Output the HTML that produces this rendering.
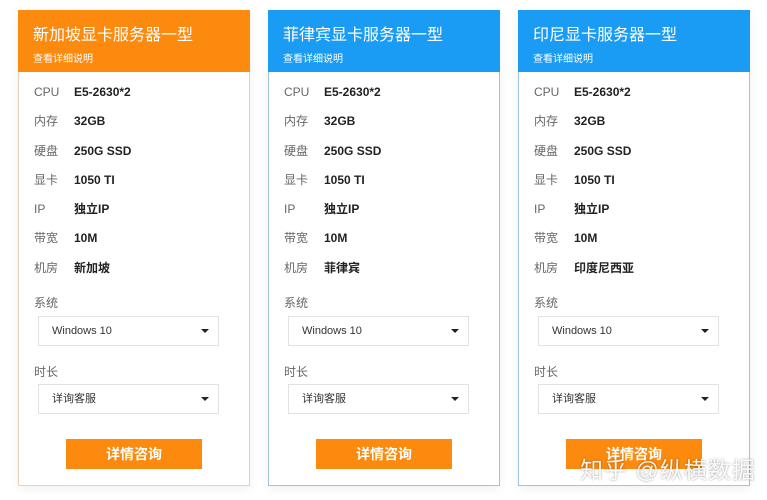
<!DOCTYPE html>
<html><head><meta charset="utf-8"><style>
*{margin:0;padding:0;box-sizing:border-box}
body{width:767px;height:500px;background:#fff;font-family:"Liberation Sans","Noto Sans CJK SC",sans-serif;position:relative;overflow:hidden}
.card{position:absolute;top:10px;width:232px;height:476px;border:1px solid #e6d3b8;background:#fff;box-shadow:0 3px 10px rgba(0,0,0,.06)}
.card.b{border-color:#9fc6d8}
.hd{height:62px;background:#fb8a0e;color:#fff;padding:15px 0 0 15px;margin:-1px -1px 0 -1px}
.b .hd{background:#1a9cf4}
.hd h2{font-size:16px;font-weight:normal;line-height:22px}
.hd p{font-size:10px;margin-top:6px;line-height:14px}
.row{position:absolute;left:15px;font-size:12px;color:#666;height:20px;line-height:20px;width:200px}
.row span{position:absolute;left:0;top:0}
.row b{position:absolute;left:40px;top:0;color:#222;white-space:nowrap}
.lab{position:absolute;left:15px;font-size:12px;color:#666}
.sel{position:absolute;left:19px;width:181px;height:30px;border:1px solid #e2e2e2;font-size:11px;color:#333;padding:0 0 0 13px;line-height:28px}
.sel:after{content:"";position:absolute;right:9px;top:12px;border:4px solid transparent;border-top:4px solid #222;border-bottom:0}
.btn{position:absolute;left:47px;top:428px;width:136px;height:30px;background:#fb8a0e;color:#fff;font-weight:bold;font-size:14px;text-align:center;line-height:30px}
.wm{position:absolute;left:580px;top:451px;font-size:23px;color:rgba(255,255,255,.92);text-shadow:0 0 2px rgba(0,0,0,.4);letter-spacing:1px}
</style></head><body>
<div class="card" style="left:18px">
<div class="hd"><h2>新加坡显卡服务器一型</h2><p>查看详细说明</p></div>
<div class="row" style="top:71px"><span>CPU</span><b>E5-2630*2</b></div>
<div class="row" style="top:100px"><span>内存</span><b>32GB</b></div>
<div class="row" style="top:130px"><span>硬盘</span><b>250G SSD</b></div>
<div class="row" style="top:159px"><span>显卡</span><b>1050 TI</b></div>
<div class="row" style="top:188px"><span>IP</span><b>独立IP</b></div>
<div class="row" style="top:217px"><span>带宽</span><b>10M</b></div>
<div class="row" style="top:247px"><span>机房</span><b>新加坡</b></div>
<div class="lab" style="top:283px">系统</div>
<div class="sel" style="top:305px">Windows 10</div>
<div class="lab" style="top:352px">时长</div>
<div class="sel" style="top:373px">详询客服</div>
<div class="btn">详情咨询</div>
</div>
<div class="card b" style="left:268px">
<div class="hd"><h2>菲律宾显卡服务器一型</h2><p>查看详细说明</p></div>
<div class="row" style="top:71px"><span>CPU</span><b>E5-2630*2</b></div>
<div class="row" style="top:100px"><span>内存</span><b>32GB</b></div>
<div class="row" style="top:130px"><span>硬盘</span><b>250G SSD</b></div>
<div class="row" style="top:159px"><span>显卡</span><b>1050 TI</b></div>
<div class="row" style="top:188px"><span>IP</span><b>独立IP</b></div>
<div class="row" style="top:217px"><span>带宽</span><b>10M</b></div>
<div class="row" style="top:247px"><span>机房</span><b>菲律宾</b></div>
<div class="lab" style="top:283px">系统</div>
<div class="sel" style="top:305px">Windows 10</div>
<div class="lab" style="top:352px">时长</div>
<div class="sel" style="top:373px">详询客服</div>
<div class="btn">详情咨询</div>
</div>
<div class="card b" style="left:518px">
<div class="hd"><h2>印尼显卡服务器一型</h2><p>查看详细说明</p></div>
<div class="row" style="top:71px"><span>CPU</span><b>E5-2630*2</b></div>
<div class="row" style="top:100px"><span>内存</span><b>32GB</b></div>
<div class="row" style="top:130px"><span>硬盘</span><b>250G SSD</b></div>
<div class="row" style="top:159px"><span>显卡</span><b>1050 TI</b></div>
<div class="row" style="top:188px"><span>IP</span><b>独立IP</b></div>
<div class="row" style="top:217px"><span>带宽</span><b>10M</b></div>
<div class="row" style="top:247px"><span>机房</span><b>印度尼西亚</b></div>
<div class="lab" style="top:283px">系统</div>
<div class="sel" style="top:305px">Windows 10</div>
<div class="lab" style="top:352px">时长</div>
<div class="sel" style="top:373px">详询客服</div>
<div class="btn">详情咨询</div>
</div>
<div class="wm">知乎 @纵横数据</div>
</body></html>
